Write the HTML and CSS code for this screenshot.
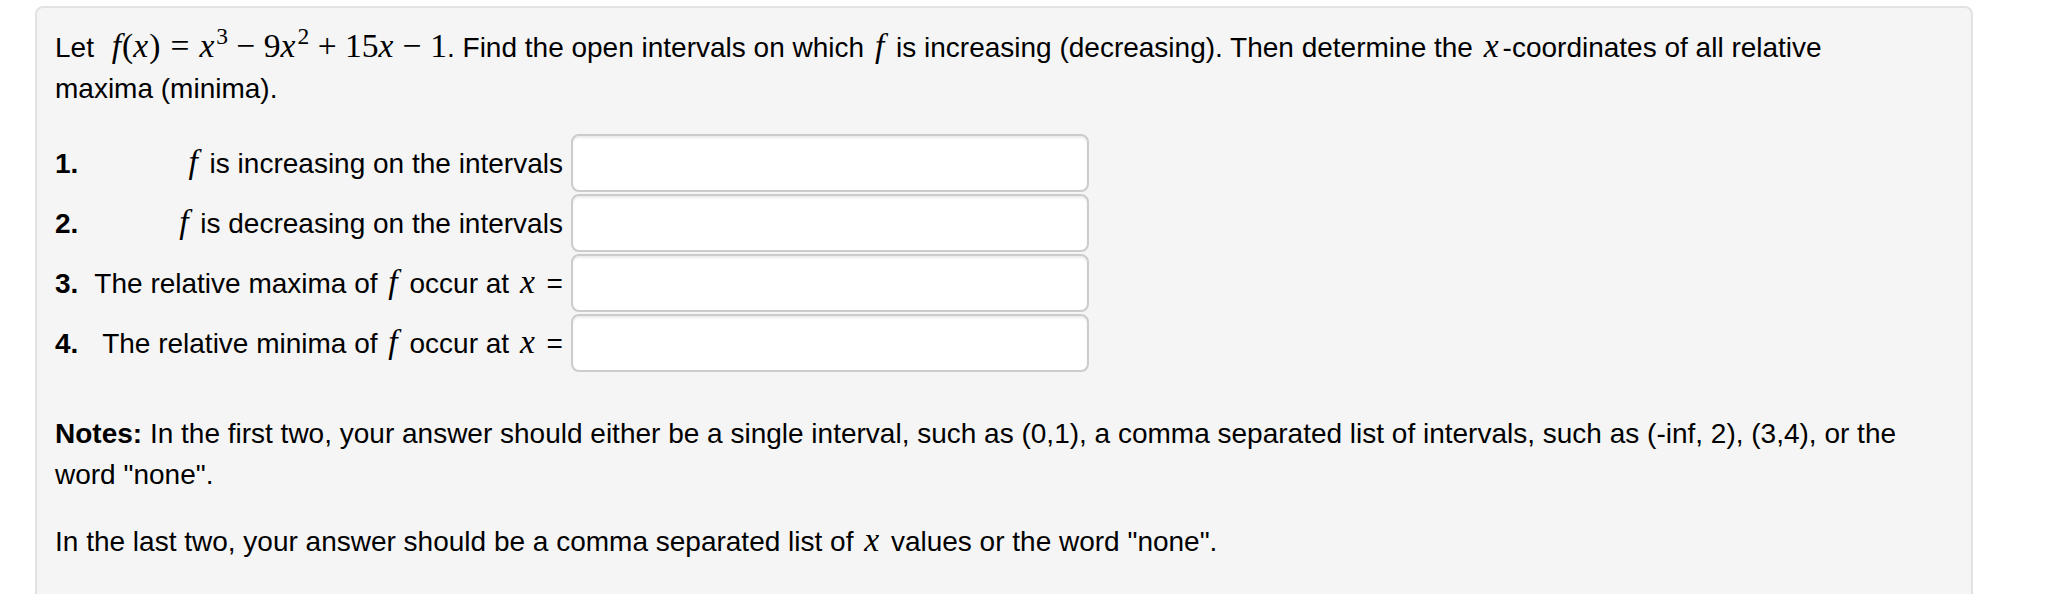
FILE: index.html
```html
<!DOCTYPE html>
<html lang="en">
<head>
    <meta charset="UTF-8">
    <meta name="viewport" content="width=device-width, initial-scale=1.0">
    <title>Increasing and Decreasing Intervals</title>
    <link rel="stylesheet" href="styles.css">
</head>
<body>
    <div class="problem">
        <p class="intro">
            Let <span class="math formula"><i>f</i>(<i>x</i>)<span class="rel">=</span><i>x</i><sup>3</sup><span class="bin">&minus;</span>9<i>x</i><sup>2</sup><span class="bin">+</span>15<i>x</i><span class="bin">&minus;</span>1</span>. Find the open intervals on which <span class="math"><i>f</i></span> is increasing (decreasing). Then determine the <span class="math"><i>x</i></span>-coordinates of all relative maxima (minima).
        </p>

        <div class="answers">
            <span class="num">1.</span>
            <label for="ans1" class="label"><span class="math"><i>f</i></span> is increasing on the intervals</label>
            <input type="text" id="ans1" name="ans1">

            <span class="num">2.</span>
            <label for="ans2" class="label"><span class="math"><i>f</i></span> is decreasing on the intervals</label>
            <input type="text" id="ans2" name="ans2">

            <span class="num">3.</span>
            <label for="ans3" class="label">The relative maxima of <span class="math"><i>f</i></span> occur at <span class="math"><i>x</i></span> =</label>
            <input type="text" id="ans3" name="ans3">

            <span class="num">4.</span>
            <label for="ans4" class="label">The relative minima of <span class="math"><i>f</i></span> occur at <span class="math"><i>x</i></span> =</label>
            <input type="text" id="ans4" name="ans4">
        </div>

        <p class="notes"><b>Notes:</b> In the first two, your answer should either be a single interval, such as (0,1), a comma separated list of intervals, such as (-inf, 2), (3,4), or the word "none".</p>

        <p class="notes last">In the last two, your answer should be a comma separated list of <span class="math"><i>x</i></span> values or the word "none".</p>
    </div>
</body>
</html>
```

FILE: styles.css
```css
body {
    margin: 0;
    padding: 0;
    background: #fff;
    font-family: "Liberation Sans", Arial, sans-serif;
    font-size: 28px;
    color: #000;
}
.problem {
    /*grey problem card*/
    margin: 6px 0 0 35px;
    width: 1938px;
    box-sizing: border-box;
    background: #f5f5f5;
    border: 2px solid #e3e3e3;
    border-radius: 8px;
    padding: 19px 60px 40px 18px;
    line-height: 41px;
}
p {
    margin: 0;
}
.math {
    font-family: "Liberation Serif", "Times New Roman", serif;
    font-size: 1.2em;
    line-height: 1;
    white-space: nowrap;
    padding: 0 3px;
}
.math.formula {
    padding: 0 0 0 10px;
}
.math i {
    font-style: italic;
    margin-right: 1px;
}
.math sup {
    font-size: 0.7em;
    line-height: 0;
    vertical-align: 0.55em;
    margin-left: 1px;
}
.rel {
    margin: 0 0.3em;
}
.bin {
    margin: 0 0.25em;
}
.answers {
    display: grid;
    grid-template-columns: auto auto 518px;
    justify-content: start;
    align-items: center;
    margin-top: 24px;
}
.num {
    font-weight: bold;
    padding-right: 16px;
}
.label {
    text-align: right;
    padding-right: 8px;
    white-space: nowrap;
}
.answers input {
    height: 58px;
    margin: 1px 0;
    box-sizing: border-box;
    background: #fff;
    border: 2px solid #ccc;
    border-radius: 8px;
    box-shadow: inset 0 2px 2px rgba(0, 0, 0, 0.075);
    font-size: 24px;
    padding: 0 12px;
}
.notes {
    margin-top: 40px;
}
.notes.last {
    margin-top: 26px;
}
```
